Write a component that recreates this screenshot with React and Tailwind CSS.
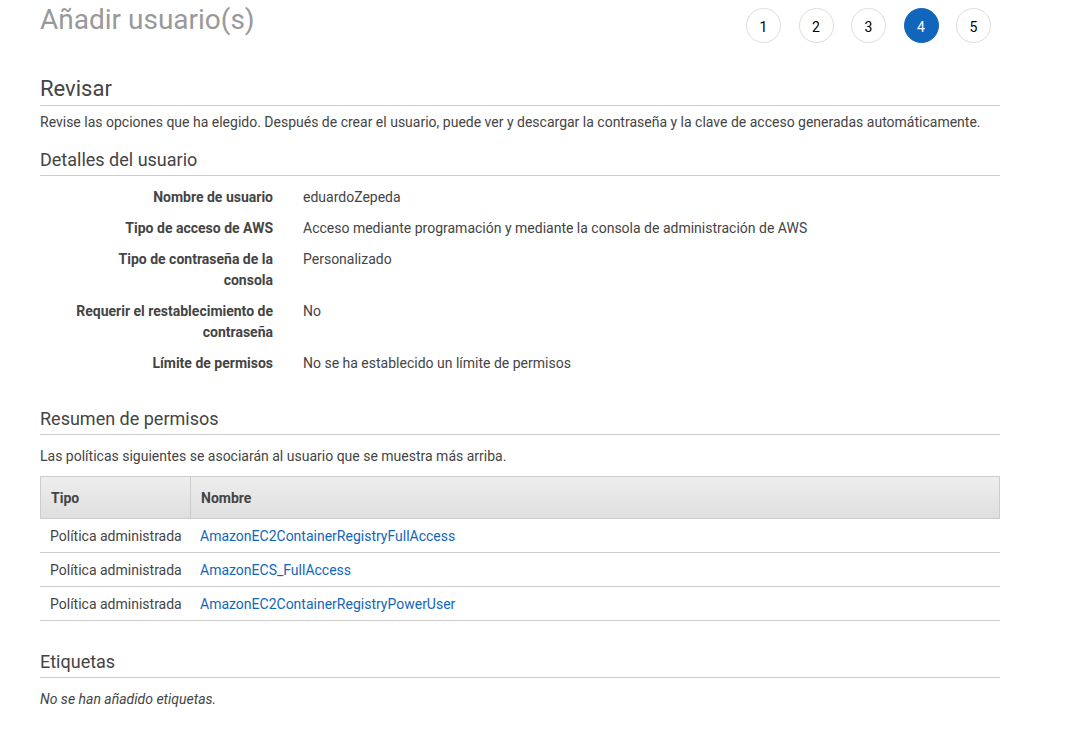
const steps = [1, 2, 3, 4, 5];
const details = [
  ["Nombre de usuario", "eduardoZepeda"],
  ["Tipo de acceso de AWS", "Acceso mediante programación y mediante la consola de administración de AWS"],
  ["Tipo de contraseña de la consola", "Personalizado"],
  ["Requerir el restablecimiento de contraseña", "No"],
  ["Límite de permisos", "No se ha establecido un límite de permisos"],
];
const policies = [
  "AmazonEC2ContainerRegistryFullAccess",
  "AmazonECS_FullAccess",
  "AmazonEC2ContainerRegistryPowerUser",
];

function SectionTitle({ children }) {
  return <h3 className="border-b border-[#ccc] pt-px pb-[3px] text-lg leading-6">{children}</h3>;
}

export default function App() {
  return (
    <main className="min-h-screen bg-white pr-[77px] pb-5 pl-10 font-['Roboto',sans-serif] text-sm leading-[21px] text-[#444]">
      <header className="flex items-start justify-between pr-[9px]">
        <h1 className="text-[28px] leading-10 text-[#999]">Añadir usuario(s)</h1>
        <ol className="flex w-[245px] justify-between pt-2">
          {steps.map((n) => (
            <li key={n}>
              <button
                type="button"
                aria-current={n === 4 ? "step" : undefined}
                className={
                  n === 4
                    ? "flex size-[35px] items-center justify-center rounded-full border border-[#1166bb] bg-[#1166bb] pt-1 text-white"
                    : "flex size-[35px] items-center justify-center rounded-full border border-[#ddd] bg-white pt-1 text-black"
                }
              >
                {n}
              </button>
            </li>
          ))}
        </ol>
      </header>

      <h2 className="mt-[29px] border-b border-[#ccc] text-[22px] leading-[33px]">Revisar</h2>
      <p className="pt-[6px]">
        Revise las opciones que ha elegido. Después de crear el usuario, puede ver y descargar la contraseña y la clave de acceso generadas automáticamente.
      </p>

      <section className="pt-[14px]">
        <SectionTitle>Detalles del usuario</SectionTitle>
        <dl className="flex flex-col gap-[10px] pt-[11px]">
          {details.map(([label, value]) => (
            <div key={label} className="flex gap-[30px]">
              <dt className="w-[233px] shrink-0 pl-8 text-right font-bold">{label}</dt>
              <dd>{value}</dd>
            </div>
          ))}
        </dl>
      </section>

      <section className="pt-8">
        <SectionTitle>Resumen de permisos</SectionTitle>
        <p className="pt-[11px] pb-[9px]">Las políticas siguientes se asociarán al usuario que se muestra más arriba.</p>
        <table className="w-full table-fixed border-separate border-spacing-0 text-left">
          <thead>
            <tr>
              <th className="w-[150px] border-y border-l border-[#ccc] bg-linear-to-b from-[#eee] to-[#dfdfdf] px-[10px] pt-[11px] pb-[9px] font-bold">Tipo</th>
              <th className="border border-[#ccc] bg-linear-to-b from-[#eee] to-[#dfdfdf] px-[10px] pt-[11px] pb-[9px] font-bold">Nombre</th>
            </tr>
          </thead>
          <tbody>
            {policies.map((name) => (
              <tr key={name}>
                <td className="border-b border-[#ccc] pt-[7px] pb-[5px] pl-[10px] whitespace-nowrap">Política administrada</td>
                <td className="border-b border-[#ccc] pt-[7px] pb-[5px] pl-[10px]">
                  <a href="#" className="text-[#1166bb]">{name}</a>
                </td>
              </tr>
            ))}
          </tbody>
        </table>
      </section>

      <section className="pt-7">
        <SectionTitle>Etiquetas</SectionTitle>
        <p className="pt-[11px] italic">No se han añadido etiquetas.</p>
      </section>
    </main>
  );
}
